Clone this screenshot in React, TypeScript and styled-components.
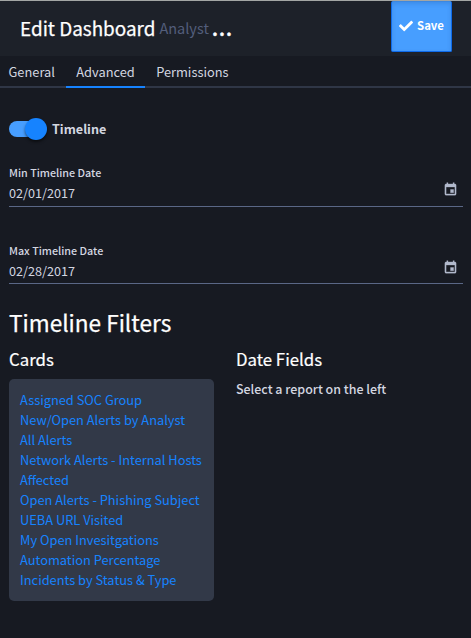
import React from 'react';
import styled, { createGlobalStyle } from 'styled-components';

const GlobalStyle = createGlobalStyle`
  * { box-sizing: border-box; }
  body {
    margin: 0;
    background: #171a22;
    color: #d3d6e0;
    font: 400 12.83px/20px "Noto Sans CJK SC", "Noto Sans", sans-serif;
  }
`;

const Panel = styled.main`
  height: 638px;
  overflow: hidden;
  border-top: 1px solid #a3a6a4;
`;

const Header = styled.header`
  display: flex;
  align-items: flex-start;
  justify-content: space-between;
  height: 55px;
  padding: 0 19px 0 20px;
  background: #1d2129;
`;

const Title = styled.h1`
  display: flex;
  align-items: flex-start;
  margin: 17px 0 0;
  font-size: 18.9px;
  line-height: 20px;
  font-weight: 400;
  color: #fff;
  -webkit-text-stroke: 0.25px;
`;

const Subtitle = styled.small`
  margin-left: 4px;
  font-size: 14.5px;
  font-weight: 400;
  color: #535e7b;
  -webkit-text-stroke: 0;
`;

const Ellipsis = styled.span`
  margin-left: 3px;
  font-weight: 500;
  font-size: 21.5px;
  line-height: 17px;
  letter-spacing: 0.5px;
`;

const SaveButton = styled.button`
  display: flex;
  align-items: center;
  justify-content: center;
  gap: 4px;
  width: 61px;
  height: 51px;
  padding: 0 0 3px;
  border: 1px solid #0f6bea;
  border-top-color: #3b87e0;
  border-radius: 2px;
  background: #479eff;
  box-shadow: inset 0 2px 4px rgba(0, 40, 100, 0.15);
  color: #fff;
  font: 700 11.4px/20px "Noto Sans CJK SC", "Noto Sans", sans-serif;
`;

const CheckIcon = styled.svg`
  width: 14px;
  height: 14px;
  margin-top: 1px;
  fill: currentColor;
`;

const Tabs = styled.nav`
  display: flex;
  height: 32px;
  border-bottom: 2px solid #2f3646;
`;

const Tab = styled.a<{ $active?: boolean }>`
  height: 32px;
  padding: 6px 10.7px 0;
  border-bottom: 2px solid ${p => (p.$active ? '#1683ff' : 'transparent')};
  color: #d3d6e0;

  &:first-child { padding-left: 8.5px; }
`;

const Content = styled.section`
  padding: 30px 8px 0 9px;
`;

const ToggleRow = styled.label`
  display: flex;
  align-items: center;
  gap: 5px;
  height: 22px;
  font-size: 12.6px;
  font-weight: 700;
`;

const Track = styled.span`
  display: flex;
  align-items: center;
  justify-content: flex-end;
  width: 38px;
  height: 16px;
  border-radius: 8px;
  background: linear-gradient(to right, #479eff 28px, transparent 28px);
`;

const Thumb = styled.span`
  flex: none;
  width: 22px;
  height: 22px;
  border-radius: 50%;
  background: #1683ff;
  box-shadow: 0 2px 3px rgba(0, 0, 0, 0.55);
`;

const Field = styled.div<{ $gap: number; $height: number }>`
  height: ${p => p.$height}px;
  margin-top: ${p => p.$gap}px;
  border-bottom: 1px solid #5a6786;
`;

const FieldLabel = styled.div`
  font-size: 10.75px;
  font-weight: 500;
`;

const FieldValue = styled.div`
  display: flex;
  justify-content: space-between;
  font-size: 12.65px;
`;

const CalendarIcon = styled.svg`
  width: 15px;
  height: 15px;
  margin: -1px 5px 0 0;
  fill: #b1b9cc;
  stroke: #b1b9cc;
  stroke-width: 0.5;
`;

const SectionTitle = styled.h2`
  margin: 25px 0 0;
  padding-top: 1px;
  font-size: 22.6px;
  line-height: 25px;
  font-weight: 400;
  color: #fff;
  -webkit-text-stroke: 0.25px;
`;

const Columns = styled.div`
  display: grid;
  grid-template-columns: 205px 1fr;
  column-gap: 22px;
  margin-top: 13px;
`;

const ColumnTitle = styled.h3`
  margin: 0 0 9px;
  font-size: 16.8px;
  line-height: 22px;
  font-weight: 400;
  color: #fff;
  -webkit-text-stroke: 0.2px;
`;

const CardList = styled.ul`
  margin: 0;
  padding: 11px;
  list-style: none;
  border-radius: 5px;
  background: #323948;
  color: #1683ff;
`;

const Hint = styled.p`
  margin: 0;
  font-size: 12.45px;
  font-weight: 500;
`;

const cards = [
  'Assigned SOC Group',
  'New/Open Alerts by Analyst',
  'All Alerts',
  'Network Alerts - Internal Hosts Affected',
  'Open Alerts - Phishing Subject',
  'UEBA URL Visited',
  'My Open Invesitgations',
  'Automation Percentage',
  'Incidents by Status & Type',
];

function DateField({ label, value, gap, height }: { label: string; value: string; gap: number; height: number }) {
  return (
    <Field $gap={gap} $height={height}>
      <FieldLabel>{label}</FieldLabel>
      <FieldValue>
        {value}
        <CalendarIcon viewBox="0 0 24 24">
          <path d="M17 12h-5v5h5v-5zM16 1v2H8V1H6v2H5c-1.11 0-1.99.9-1.99 2L3 19c0 1.1.89 2 2 2h14c1.1 0 2-.9 2-2V5c0-1.1-.9-2-2-2h-1V1h-2zm3 18H5V8h14v11z" />
        </CalendarIcon>
      </FieldValue>
    </Field>
  );
}

export default function App() {
  return (
    <Panel>
      <GlobalStyle />
      <Header>
        <Title>
          Edit Dashboard<Subtitle>Analyst</Subtitle>
          <Ellipsis>...</Ellipsis>
        </Title>
        <SaveButton>
          <CheckIcon viewBox="0 0 512 512">
            <path d="M173.9 439.4 7.5 273c-10-10-10-26.200 0-36.200l36.200-36.200c10-10 26.200-10 36.200 0L192 312.700 432.100 72.600c10-10 26.200-10 36.200 0l36.200 36.200c10 10 10 26.200 0 36.200L210.100 439.400c-10 10-26.200 10-36.200 0z" />
          </CheckIcon>
          Save
        </SaveButton>
      </Header>
      <Tabs>
        <Tab>General</Tab>
        <Tab $active>Advanced</Tab>
        <Tab>Permissions</Tab>
      </Tabs>
      <Content>
        <ToggleRow>
          <Track><Thumb /></Track>
          Timeline
        </ToggleRow>
        <DateField label="Min Timeline Date" value="02/01/2017" gap={23} height={44} />
        <DateField label="Max Timeline Date" value="02/28/2017" gap={34} height={43} />
        <SectionTitle>Timeline Filters</SectionTitle>
        <Columns>
          <div>
            <ColumnTitle>Cards</ColumnTitle>
            <CardList>
              {cards.map(card => <li key={card}>{card}</li>)}
            </CardList>
          </div>
          <div>
            <ColumnTitle>Date Fields</ColumnTitle>
            <Hint>Select a report on the left</Hint>
          </div>
        </Columns>
      </Content>
    </Panel>
  );
}
